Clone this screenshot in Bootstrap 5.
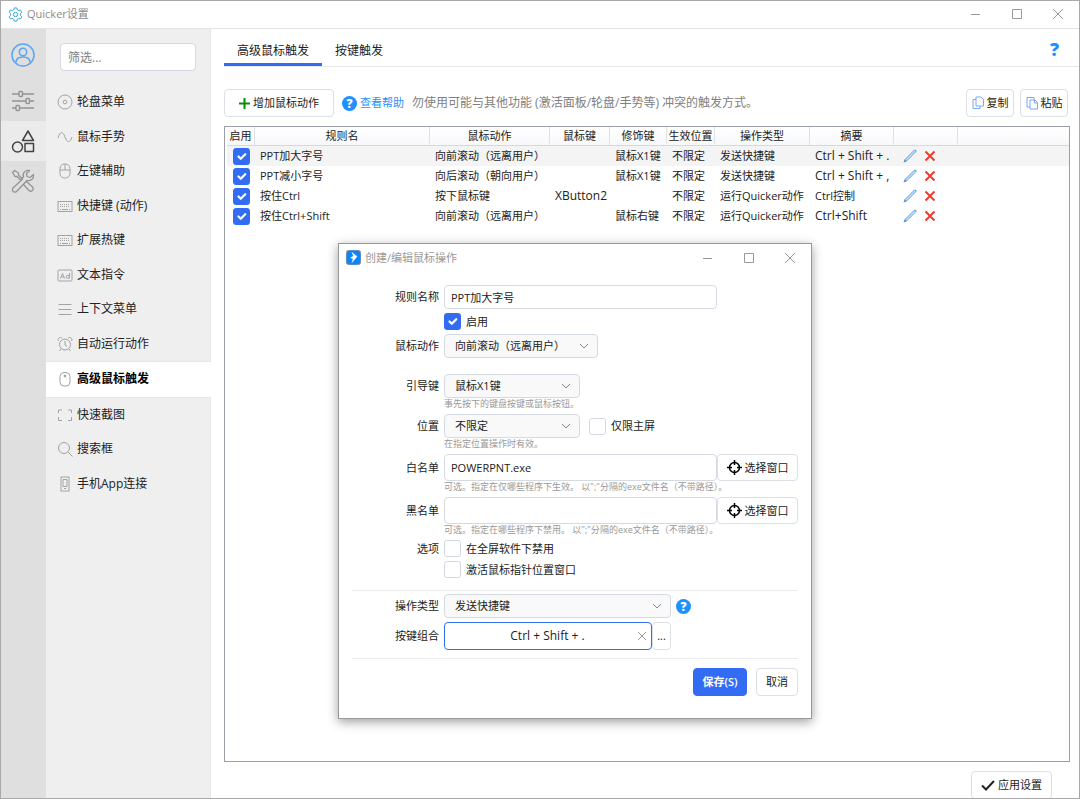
<!DOCTYPE html>
<html lang="zh-CN">
<head>
<meta charset="utf-8">
<meta name="viewport" content="width=device-width, initial-scale=1">
<title>Quicker设置</title>
<link rel="stylesheet" href="https://cdn.jsdelivr.net/npm/bootstrap@5.3.0/dist/css/bootstrap.min.css">
<style>
:root{--accent:#326cf3;--line:#dcdfe6;--sky:#1e90ff}
body{font:11px/16px "Open Sans","Noto Sans CJK SC",sans-serif;color:#222;background:#fff}
svg{display:block;flex:none;fill:none;stroke:currentColor}
.shell{height:100vh;border:1px solid #a9a9a9;overflow:hidden}
.titlebar{height:28px;border-bottom:1px solid #e4e4e4;color:#8c8c8c;padding:0 1px 1px 7px}
.winbtn{width:41px;height:26px;border:0;background:none;padding:0;color:#999;display:flex;align-items:center;justify-content:center}
.rail{width:45px;background:#dfdfdf;color:#949494}
.rail button{width:45px;height:40px;border:0;background:none;color:inherit;padding:0 1px 0 0;display:flex;align-items:center;justify-content:center}
.rail .account{height:52px;color:#5aa5f5}
.rail .current{background:#ebebeb;color:#444}
.side{width:165px;background:#efefef;border-right:1px solid #e6e6e6}
.side .form-control{margin:14px 14px 14px 14px;width:auto;height:28px;font-size:12px;padding-left:7px}
.menu{height:416px;margin:0;padding:0;list-style:none}
.menu a{height:100%;padding-left:11px;gap:4px;font-size:12px;color:#222;text-decoration:none;display:flex;align-items:center}
.menu svg{color:#a3a3a3}
.menu .current{background:#fff;border-top:1px solid #e6e6e6;border-bottom:1px solid #e6e6e6;margin-right:-1px;font-weight:700}
.menu .current a{color:#000}
.form-control,.form-select{font-size:11px;line-height:16px;height:24px;padding:3px 6px;border:1px solid #d5dae2;border-radius:4px;color:#222;background-color:#fff}
.form-control::placeholder{color:#808080}
.form-select{padding:0 24px 0 10px;background-color:#f9f9f9;background-size:12px 12px;background-position:right 7px center;background-image:url("data:image/svg+xml,%3Csvg xmlns='http://www.w3.org/2000/svg' viewBox='0 0 12 12'%3E%3Cpath fill='none' stroke='%23888' d='M2 4l4 4 4-4'/%3E%3C/svg%3E")}
.form-check-input{width:17px;height:17px;margin:0;float:none;border:1px solid #d3d8e0;border-radius:2px;flex:none}
.form-check-input:checked{background-color:var(--accent);border-color:var(--accent)}
.btn{font-size:11px;line-height:16px;height:28px;padding:0 6px;border:1px solid var(--line);border-radius:4px;color:#222;background:#fff;display:flex;align-items:center;justify-content:center;gap:3px;white-space:nowrap}
.btn-save{background:var(--accent);border-color:var(--accent);color:#fff;font-weight:600;width:54px}
.tabbar{margin-left:13px;height:38px;border-bottom:1px solid #e8e8e8;padding-right:19px}
.tabbar .nav-link{font-size:12px;line-height:18px;color:#222;padding:13px 13px 3px;height:37px;border:0;border-bottom:3px solid transparent;border-radius:0;background:none}
.tabbar .nav-link.active{border-bottom-color:var(--accent);color:#222}
.helpmark{font-size:18px;font-weight:800;color:var(--sky);text-decoration:none;width:11px;text-align:center;line-height:40px}
.ball{width:15px;height:15px;border-radius:50%;background:var(--sky);color:#fff;font-weight:800;font-size:12px;line-height:15px;text-align:center;flex:none}
.content{padding:22px 9px 0 13px}
.tools{margin-bottom:9px;padding-right:2px}
.sheet{border:1px solid #9a9ea8;padding-left:2px;overflow:hidden}
.rules{width:100%;table-layout:fixed;border-collapse:separate;border-spacing:0}
.rules th{height:19px;padding:0;text-align:center;font-weight:400;border-right:1px solid #dfe1e5;border-bottom:1px solid #d8d8d8;background:linear-gradient(#fff,#f7f8fa);white-space:nowrap}
.rules th:last-child{border-right:0}
.rules td{height:20px;padding:0 0 0 6px;white-space:nowrap;overflow:hidden}
.rules td + td{padding-left:5px}
.rules .picked td{background:#f4f4f4}
.rules .latin{font-size:12px}
.rules td button{border:0;background:none;padding:0}
.foot{height:36px;padding-right:27px;overflow:hidden}
.dialog-win{position:absolute;left:338px;top:243px;width:474px;background:#fff;border:1px solid #989898;box-shadow:0 3px 10px rgba(0,0,0,.38)}
.dialog-head{height:27px;padding:0 1px 0 7px;color:#999}
.dialog-body{padding:14px 13px 22px}
.line{display:flex;align-items:center;gap:5px}
.line .caption{width:87px;text-align:right;flex:none}
.line .blank{width:87px;flex:none}
.tick{display:flex;align-items:center;gap:5px}
.hint{margin-left:92px;font-size:9px;line-height:12px;color:#999;white-space:nowrap;min-height:12px}
.w-name{width:273px;flex:none}.w-act{width:154px}.w-key{width:136px}.w-type{width:227px}
.tall{height:27px}
.rulebar{height:1px;background:#ececec}
.combo{width:208px;height:28px;border:1px solid var(--accent);border-radius:4px;display:flex;align-items:center;padding-right:4px}
.combo input{border:0;outline:0;width:100%;min-width:0;text-align:center;font-size:12px;background:none;padding:0 0 0 13px;color:#222}
.combo button{border:0;background:none;padding:0;color:#999}
</style>
</head>
<body>
<div class="shell d-flex flex-column">
  <header class="titlebar d-flex align-items-center flex-shrink-0">
    <svg width="15" height="15" viewBox="0 0 16 16" style="color:#2e9fd8"><path d="M6.600 1h2.800l.5 2 1.400.8 2-.6 1.400 2.400L13.200 7v2l1.500 1.400-1.400 2.400-2-.6-1.400.8-.5 2H6.600l-.5-2-1.400-.8-2 .6-1.400-2.400L2.800 9V7L1.300 5.600l1.400-2.400 2 .6L6.100 3z"/><circle cx="8" cy="8" r="2.300"/></svg>
    <span class="ms-1 me-auto">Quicker设置</span>
    <button class="winbtn" aria-label="最小化"><svg width="10" height="10"><path d="M0 5.500h9"/></svg></button>
    <button class="winbtn" aria-label="最大化"><svg width="10" height="10"><path d="M.5.5h9v9h-9z"/></svg></button>
    <button class="winbtn" aria-label="关闭"><svg width="10" height="10"><path d="M0 0l10 10M10 0L0 10"/></svg></button>
  </header>
  <div class="d-flex flex-grow-1" style="min-height:0">
    <nav class="rail flex-shrink-0" aria-label="分类">
      <button class="account" aria-label="账户"><svg width="24" height="24" viewBox="0 0 24 24" stroke-width="1.500"><circle cx="12" cy="12" r="11"/><circle cx="12" cy="9" r="3.700"/><path d="M5 19.500c0-4.500 3-5.500 7-5.500s7 1 7 5.500"/></svg></button>
      <button aria-label="常规"><svg width="24" height="22" viewBox="0 0 24 22" stroke-width="1.400"><path d="M1 4h7M12 4h11M1 11h14M19 11h4M1 18h4M9 18h14"/><rect x="8" y="1.500" width="3.500" height="5" rx="1"/><rect x="15" y="8.500" width="3.500" height="5" rx="1"/><rect x="5" y="15.500" width="3.500" height="5" rx="1"/></svg></button>
      <button class="current" aria-label="触发"><svg width="24" height="24" viewBox="0 0 24 24" stroke-width="1.500"><path d="M17 2l5.500 9.500h-11zM14 14.500h8.500v8H14z" stroke-linejoin="round"/><circle cx="6.500" cy="18" r="5"/></svg></button>
      <button aria-label="工具"><svg width="24" height="24" viewBox="0 0 24 24" stroke-width="1.300" stroke-linejoin="round"><path d="M1.500 3.500l2-2 4 2.500v2l4 4-1.500 1.500-4-4H4zM13.500 14l2-1.500 6 5.500c2 2.500-1 5.500-3.500 3.500L12.500 15.500zM9.500 12l-7 6.500c-3 3 1 6.500 3.500 3.500l10-10.500c4 1 7-2 6.500-6l-3.500 3-3-1-.5-3 3-3c-4-1-7.500 2.500-6 6.500l-3 3"/></svg></button>
    </nav>
    <aside class="side flex-shrink-0 d-flex flex-column">
      <input class="form-control" type="text" placeholder="筛选..." aria-label="筛选">
      <ul class="menu d-flex flex-column">
        <li class="flex-fill"><a href="#"><svg width="16" height="16"><circle cx="8" cy="8" r="7"/><circle cx="8" cy="8" r="1.800"/></svg>轮盘菜单</a></li>
        <li class="flex-fill"><a href="#"><svg width="16" height="16"><path d="M1 9C3 2 6 2 8 8s5 6 7 0"/></svg>鼠标手势</a></li>
        <li class="flex-fill"><a href="#"><svg width="16" height="16"><rect x="3" y="1" width="10" height="14" rx="4.500"/><path d="M3 7h10M8 1v6"/></svg>左键辅助</a></li>
        <li class="flex-fill"><a href="#"><svg width="16" height="16"><rect x="1" y="3.500" width="14" height="10"/><path d="M3 6.500h10M3 8.500h10" stroke-dasharray="1 1"/><path d="M3 11.500h1M5 11.500h6M12 11.500h1"/></svg>快捷键 (动作)</a></li>
        <li class="flex-fill"><a href="#"><svg width="16" height="16"><rect x="1" y="3.500" width="14" height="10"/><path d="M3 6.500h10M3 8.500h10" stroke-dasharray="1 1"/><path d="M3 11.500h1M5 11.500h6M12 11.500h1"/></svg>扩展热键</a></li>
        <li class="flex-fill"><a href="#"><svg width="16" height="16"><rect x="1" y="3" width="14" height="11" rx="1"/><path d="M3.500 11.500l2-5 2 5M4.200 10h2.600M12.500 6v5.500"/><circle cx="10.800" cy="9.800" r="1.600"/></svg>文本指令</a></li>
        <li class="flex-fill"><a href="#"><svg width="16" height="16"><path d="M1.500 3.500h13M1.500 8.500h13M1.500 13.500h13"/></svg>上下文菜单</a></li>
        <li class="flex-fill"><a href="#"><svg width="16" height="16"><circle cx="8" cy="8.500" r="5.500"/><path d="M8 5v4l2 1.500M1.500 5C0 2.500 3 .5 5 2M14.500 5C16 2.500 13 .5 11 2M4 13l-1.500 2M12 13l1.500 2"/></svg>自动运行动作</a></li>
        <li class="flex-fill current"><a href="#" aria-current="page"><svg width="16" height="16"><rect x="3" y="1.500" width="10" height="13.500" rx="4"/><circle cx="8" cy="5" r="1" fill="#a3a3a3"/></svg>高级鼠标触发</a></li>
        <li class="flex-fill"><a href="#"><svg width="16" height="16"><path d="M1.500 6V3H5M11 3h3.500v3M14.500 10v3.500H11M5 13.500H1.500V10"/></svg>快速截图</a></li>
        <li class="flex-fill"><a href="#"><svg width="16" height="16"><circle cx="7" cy="7" r="5.500"/><path d="M11 11l4.500 4.500"/></svg>搜索框</a></li>
        <li class="flex-fill"><a href="#"><svg width="16" height="16"><rect x="4" y="1" width="8" height="14"/><path d="M6 3.500h4v7H6zM7 12.500h2"/></svg>手机App连接</a></li>
      </ul>
    </aside>
    <main class="flex-grow-1 d-flex flex-column" style="min-width:0">
      <div class="tabbar d-flex flex-shrink-0">
        <div class="nav me-auto" role="tablist">
          <button class="nav-link active" role="tab" aria-selected="true">高级鼠标触发</button>
          <button class="nav-link" role="tab" aria-selected="false">按键触发</button>
        </div>
        <a class="helpmark" href="#" aria-label="帮助">?</a>
      </div>
      <div class="content flex-grow-1 d-flex flex-column" style="min-height:0">
        <div class="tools d-flex align-items-center">
          <button class="btn px-3" style="width:110px"><svg width="11" height="11" stroke-width="2" style="color:#0a8a0a"><path d="M5.500 0v11M0 5.500h11"/></svg>增加鼠标动作</button>
          <a href="#" class="d-flex align-items-center text-decoration-none ms-2" style="color:var(--sky);gap:3px"><span class="ball">?</span>查看帮助</a>
          <span class="ms-2 me-auto text-nowrap" style="font-size:12px;color:#808080">勿使用可能与其他功能 (激活面板/轮盘/手势等) 冲突的触发方式。</span>
          <div class="d-flex" style="gap:6px">
            <button class="btn" style="width:48px"><svg width="12" height="14" style="color:#7aa7f7"><path d="M4 1h5l2.500 2.500V10H4zM4 3.500H1v9h7V10"/></svg>复制</button>
            <button class="btn" style="width:48px"><svg width="12" height="14" style="color:#7aa7f7"><path d="M4 11H1V1.500h7V4M4 4h5l2.500 2.500V13H4zM8.500 4v3h3"/></svg>粘贴</button>
          </div>
        </div>
        <div class="sheet flex-grow-1">
          <table class="rules">
            <colgroup><col style="width:28px"><col style="width:175px"><col style="width:120px"><col style="width:60px"><col style="width:57px"><col style="width:48px"><col style="width:95px"><col style="width:84px"><col style="width:64px"><col></colgroup>
            <thead><tr><th>启用</th><th>规则名</th><th>鼠标动作</th><th>鼠标键</th><th>修饰键</th><th>生效位置</th><th>操作类型</th><th>摘要</th><th></th><th></th></tr></thead>
            <tbody id="rows"></tbody>
          </table>
        </div>
      </div>
      <div class="foot d-flex justify-content-end flex-shrink-0">
        <button class="btn flex-shrink-0" style="width:81px;margin-top:9px"><svg width="14" height="12" stroke-width="2"><path d="M1 6.500l4 4L13 2"/></svg>应用设置</button>
      </div>
    </main>
  </div>
</div>

<section class="dialog-win" role="dialog" aria-labelledby="dlgTitle">
  <div class="dialog-head d-flex align-items-center">
    <svg width="15" height="15" viewBox="0 0 15 15" stroke="none"><rect width="15" height="15" rx="4" fill="#0a84ff"/><path d="M6 2.500L11 6.500 6 12.500 7.200 9 4.500 7.800 7.500 6z" fill="#fff" stroke="#fff" stroke-width=".5" stroke-linejoin="round"/></svg>
    <span class="ms-1 me-auto" id="dlgTitle">创建/编辑鼠标操作</span>
    <button class="winbtn" aria-label="最小化"><svg width="10" height="10"><path d="M0 5.500h9"/></svg></button>
    <button class="winbtn" aria-label="最大化"><svg width="10" height="10"><path d="M.5.5h9v9h-9z"/></svg></button>
    <button class="winbtn" aria-label="关闭"><svg width="10" height="10"><path d="M0 0l10 10M10 0L0 10"/></svg></button>
  </div>
  <form class="dialog-body">
    <div class="line"><label class="caption" for="fName">规则名称</label><input id="fName" class="form-control w-name" value="PPT加大字号"></div>
    <div class="line mt-1"><span class="blank"></span><input id="fOn" class="form-check-input" type="checkbox" checked><label for="fOn">启用</label></div>
    <div class="line mt-1"><label class="caption" for="fAct">鼠标动作</label><select id="fAct" class="form-select w-act"><option>向前滚动（远离用户）</option></select></div>
    <div class="line mt-3"><label class="caption" for="fKey">引导键</label><select id="fKey" class="form-select w-key"><option>鼠标X1键</option></select></div>
    <div class="hint">事先按下的键盘按键或鼠标按钮。</div>
    <div class="line mt-1"><label class="caption" for="fPos">位置</label><select id="fPos" class="form-select w-key"><option>不限定</option></select><span class="tick ms-1"><input id="fMain" class="form-check-input" type="checkbox"><label for="fMain">仅限主屏</label></span></div>
    <div class="hint">在指定位置操作时有效。</div>
    <div class="line mt-1"><label class="caption" for="fWhite">白名单</label><div class="d-flex"><input id="fWhite" class="form-control tall w-name" value="POWERPNT.exe"><button type="button" class="btn tall" style="width:81px"><svg width="15" height="15" style="color:#000"><circle cx="7.500" cy="7.500" r="5" stroke-width="1.500"/><path d="M7.500 0v5M7.500 10v5M0 7.500h5M10 7.500h5" stroke-width="1.500"/></svg>选择窗口</button></div></div>
    <div class="hint">可选。指定在仅哪些程序下生效。 以";"分隔的exe文件名（不带路径）。</div>
    <div class="line mt-1"><label class="caption" for="fBlack">黑名单</label><div class="d-flex"><input id="fBlack" class="form-control tall w-name"><button type="button" class="btn tall" style="width:81px"><svg width="15" height="15" style="color:#000"><circle cx="7.500" cy="7.500" r="5" stroke-width="1.500"/><path d="M7.500 0v5M7.500 10v5M0 7.500h5M10 7.500h5" stroke-width="1.500"/></svg>选择窗口</button></div></div>
    <div class="hint">可选。指定在哪些程序下禁用。 以";"分隔的exe文件名（不带路径）。</div>
    <div class="line mt-1"><span class="caption">选项</span><input id="fFull" class="form-check-input" type="checkbox"><label for="fFull">在全屏软件下禁用</label></div>
    <div class="line mt-1"><span class="blank"></span><input id="fFocus" class="form-check-input" type="checkbox"><label for="fFocus">激活鼠标指针位置窗口</label></div>
    <div class="rulebar" style="margin-top:12px"></div>
    <div class="line" style="margin-top:3px"><label class="caption" for="fType">操作类型</label><select id="fType" class="form-select w-type"><option>发送快捷键</option></select><a href="#" class="ball text-decoration-none" aria-label="帮助">?</a></div>
    <div class="line mt-1"><label class="caption" for="fCombo">按键组合</label><div class="d-flex"><div class="combo"><input id="fCombo" value="Ctrl + Shift + ."><button type="button" aria-label="清除"><svg width="10" height="10"><path d="M1 1l8 8M9 1L1 9"/></svg></button></div><button type="button" class="btn p-0" style="width:19px">...</button></div></div>
    <div class="rulebar mt-2"></div>
    <div class="d-flex justify-content-end" style="margin-top:9px;gap:9px"><button type="button" class="btn btn-save">保存(S)</button><button type="button" class="btn" style="width:42px">取消</button></div>
  </form>
</section>

<script>
const rules = [
  ["PPT加大字号","向前滚动（远离用户）","","鼠标X1键","不限定","发送快捷键","Ctrl + Shift + ."],
  ["PPT减小字号","向后滚动（朝向用户）","","鼠标X1键","不限定","发送快捷键","Ctrl + Shift + ,"],
  ["按住Ctrl","按下鼠标键","XButton2","","不限定","运行Quicker动作","Ctrl控制"],
  ["按住Ctrl+Shift","向前滚动（远离用户）","","鼠标右键","不限定","运行Quicker动作","Ctrl+Shift"]
];
const pencil = '<svg width="14" height="14"><path d="M3 11L12 2" stroke="#6fa8e4" stroke-width="3" stroke-linecap="round"/><path d="M3 11L12 2" stroke="#c3defa" stroke-width="1.500"/><path d="M.5 13.500l1-3 2 2z" fill="#6b8fb8" stroke="none"/></svg>';
const cross = '<svg width="12" height="12"><path d="M1.500 1.500l9 9M10.500 1.500l-9 9" stroke="#f03a2c" stroke-width="2"/></svg>';
document.getElementById("rows").innerHTML = rules.map((r, i) =>
  `<tr class="${i ? "" : "picked"}"><td><input class="form-check-input d-block" type="checkbox" checked aria-label="启用 ${r[0]}"></td>` +
  r.map(t => `<td class="${/^[\x20-\x7e]+$/.test(t) ? "latin" : ""}">${t}</td>`).join("") +
  `<td><div class="d-flex align-items-center ps-1" style="gap:7px"><button aria-label="编辑">${pencil}</button><button aria-label="删除">${cross}</button></div></td><td></td></tr>`).join("");
</script>
<script src="https://cdn.jsdelivr.net/npm/bootstrap@5.3.0/dist/js/bootstrap.bundle.min.js"></script>
</body>
</html>
